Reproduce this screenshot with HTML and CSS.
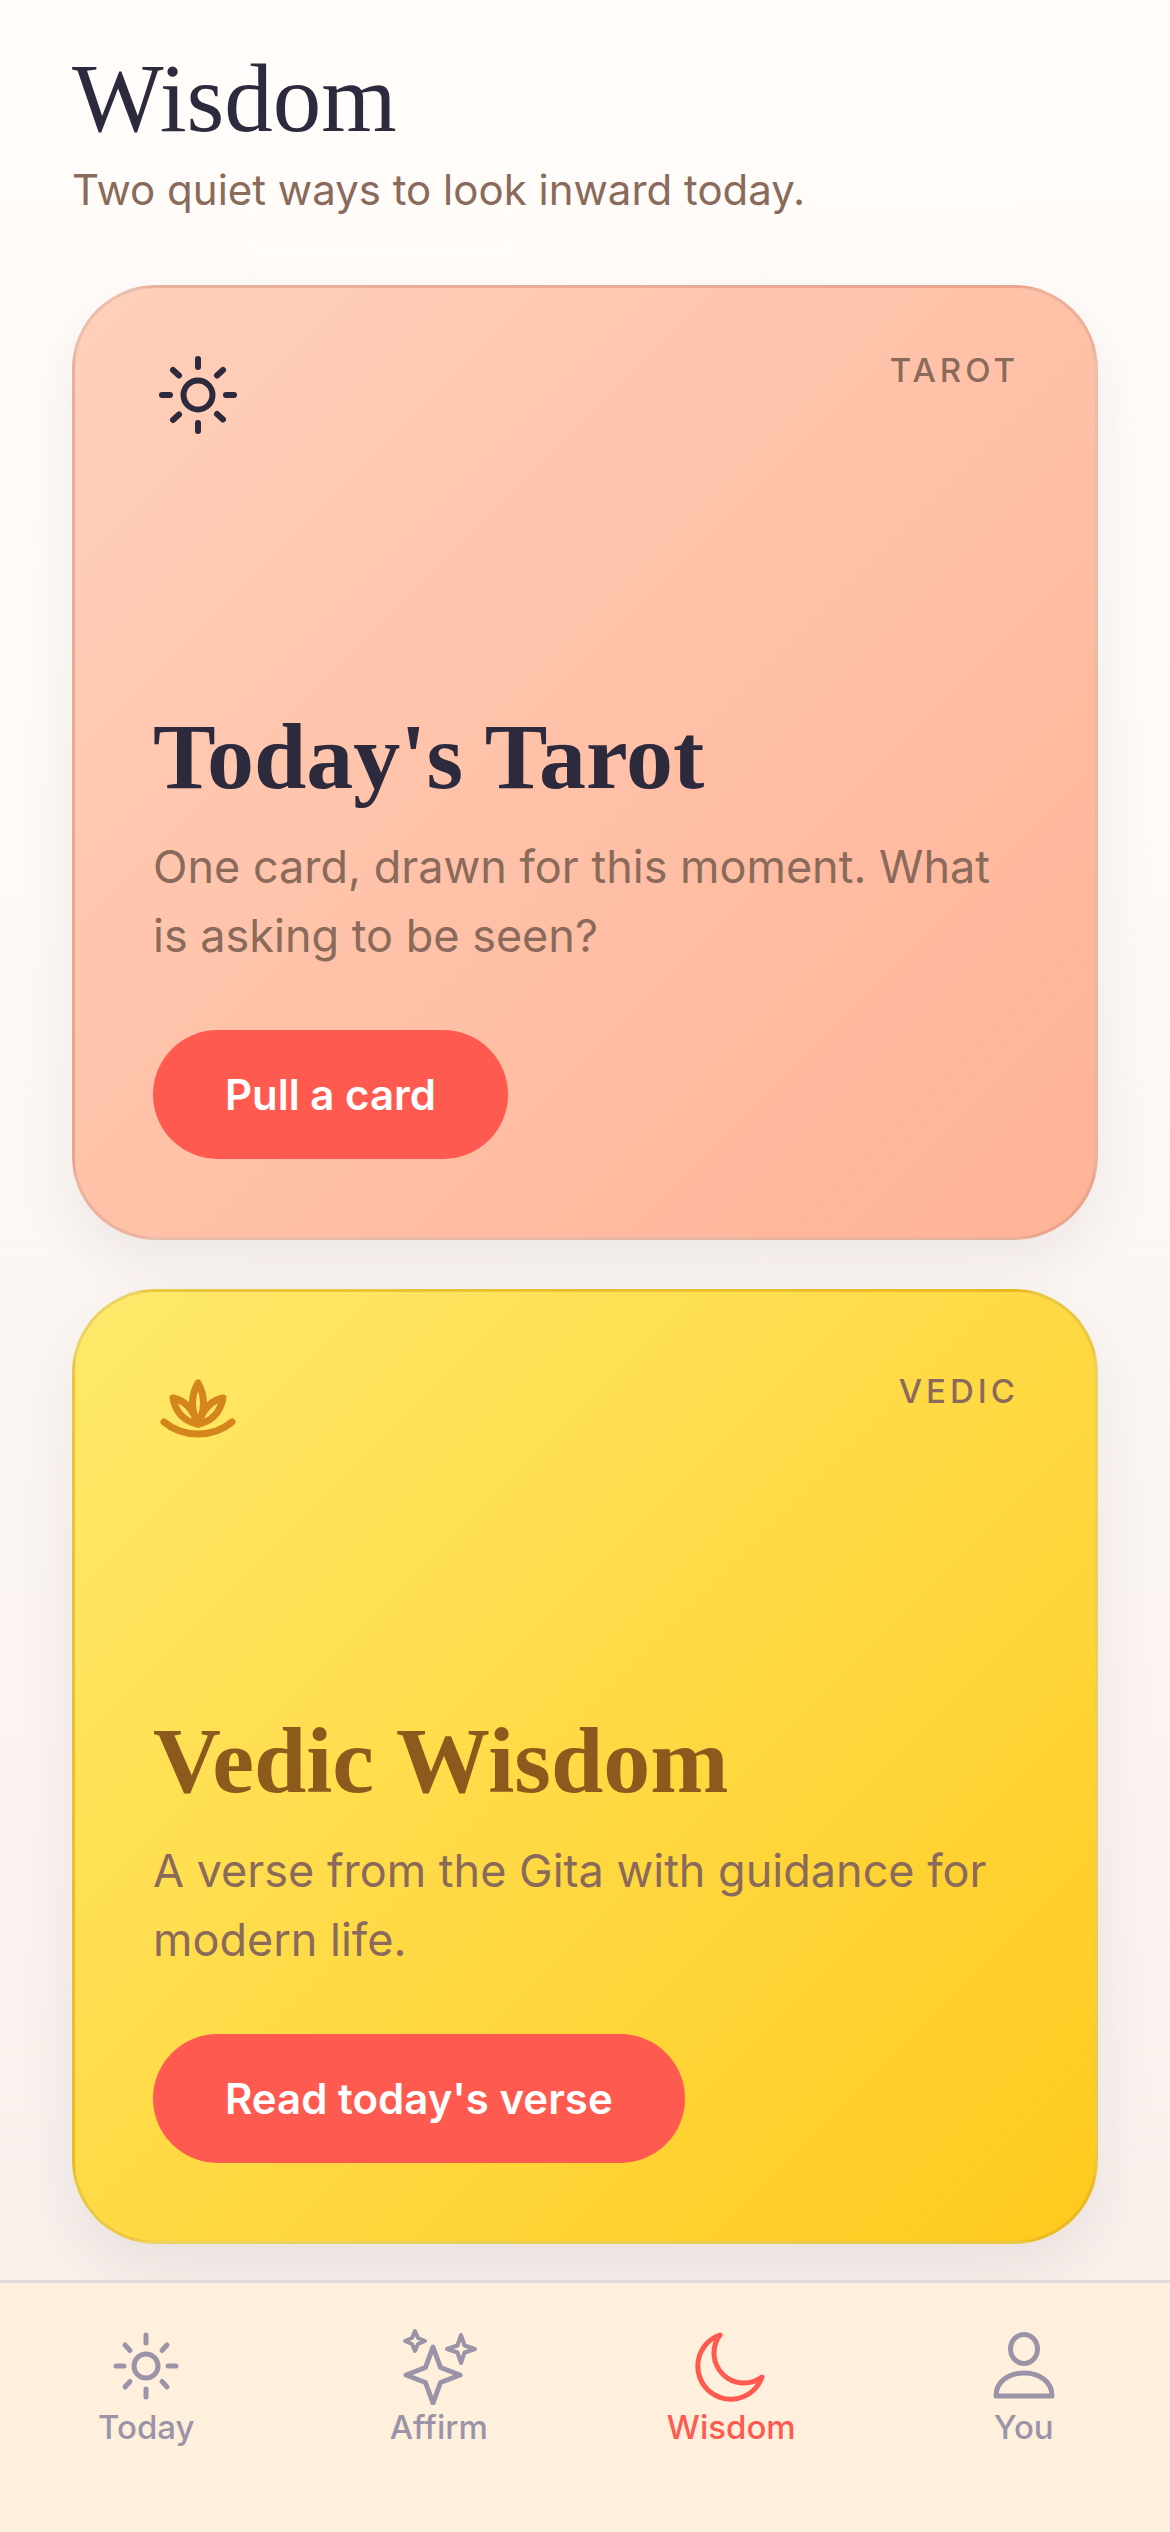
FILE: index.html
```html
<!DOCTYPE html>
<html lang="en">
<head>
<meta charset="utf-8">
<title>Wisdom</title>
<link rel="stylesheet" href="styles.css">
</head>
<body>
<div class="screen">
  <main class="content">
    <header class="head">
      <h1>Wisdom</h1>
      <p>Two quiet ways to look inward today.</p>
    </header>
    <section class="card tarot">
      <div class="card-top">
        <svg class="card-icon" viewBox="0 0 90 90" fill="none" stroke="#2d2a3e" stroke-width="6" stroke-linecap="round">
          <circle cx="45" cy="45" r="14.5"/>
          <path d="M45 9v8M45 73v8M9 45h8M73 45h8M20 20l6 5.500M64 64l6 5.500M20 70l6-5.500M64 25.500l6-5.500"/>
        </svg>
        <span class="tag">TAROT</span>
      </div>
      <h2>Today's Tarot</h2>
      <p class="desc">One card, drawn for this moment. What is asking to be seen?</p>
      <button class="cta">Pull a card</button>
    </section>
    <section class="card vedic">
      <div class="card-top">
        <svg class="card-icon" viewBox="0 0 90 90" fill="none" stroke="#d4861c" stroke-width="7" stroke-linecap="round" stroke-linejoin="round">
          <path d="M45 19C41 26 39.500 32 39.500 39C39.500 47 42 54 45 60C48 54 50.500 47 50.500 39C50.500 32 49 26 45 19Z"/>
          <path d="M20 34C30 36 39 42 45 60C33 58 23 50 20 34Z"/>
          <path d="M70 34C60 36 51 42 45 60C57 58 67 50 70 34Z"/>
          <path d="M11 58C30 74 60 74 79 58"/>
        </svg>
        <span class="tag">VEDIC</span>
      </div>
      <h2>Vedic Wisdom</h2>
      <p class="desc">A verse from the Gita with guidance for modern life.</p>
      <button class="cta">Read today's verse</button>
    </section>
  </main>
  <nav class="tabs">
    <div class="tab">
      <svg viewBox="0 0 78 78" fill="none" stroke="currentColor" stroke-width="5" stroke-linecap="round" stroke-linejoin="round">
        <circle cx="39" cy="39" r="12"/>
        <path d="M39 8v8M39 62v8M9 39h8M61 39h8M18 18l5 5.500M55 54.500l5 5.500M18 60l5-5.500M55 23.500l5-5.500"/>
      </svg>
      <span>Today</span>
    </div>
    <div class="tab">
      <svg viewBox="0 0 78 78" fill="none" stroke="currentColor" stroke-width="5" stroke-linecap="round" stroke-linejoin="round">
        <path d="M33 20L40.500 40.500L60 48L40.500 55.500L33 76L25.500 55.500L6 48L25.500 40.500Z"/>
        <path stroke-width="4" d="M15 4L18 11L25 14L18 17L15 24L12 17L5 14L12 11Z"/>
        <path stroke-width="4" d="M61 8L64.500 18.500L75 22L64.500 25.500L61 36L57.500 25.500L47 22L57.500 18.500Z"/>
      </svg>
      <span>Affirm</span>
    </div>
    <div class="tab active">
      <svg viewBox="0 0 78 78" fill="none" stroke="currentColor" stroke-width="5" stroke-linecap="round" stroke-linejoin="round">
        <path d="M28 8A33 33 0 1 0 70 50A30 30 0 0 1 28 8Z"/>
      </svg>
      <span>Wisdom</span>
    </div>
    <div class="tab">
      <svg viewBox="0 0 78 78" fill="none" stroke="currentColor" stroke-width="5" stroke-linecap="round" stroke-linejoin="round">
        <ellipse cx="39" cy="22" rx="13.500" ry="14.500"/>
        <path d="M11 69C11 55 23 46 39 46C55 46 67 55 67 69Z"/>
      </svg>
      <span>You</span>
    </div>
  </nav>
</div>
</body>
</html>
```
FILE: styles.css
```css
* { box-sizing: border-box; margin: 0; padding: 0; }
html, body { width: 1170px; height: 2532px; overflow: hidden; }
body { font-family: "Inter", "Liberation Sans", sans-serif; }
.screen {
  width: 1170px; height: 2532px;
  display: flex; flex-direction: column;
  background: linear-gradient(180deg, #fffcf9 0%, #fffbf8 25%, #f8efea 100%);
}
.content {
  flex: 1;
  padding: 0 72px;
  display: flex; flex-direction: column; gap: 49px;
}
.head { height: 236px; padding-top: 44px; }
.head h1 {
  font-family: "Liberation Serif", serif;
  font-weight: 400; font-size: 97px; line-height: 110px;
  color: #2d2a3e;
}
.head p { font-size: 42px; line-height: 60px; margin-top: 6px; color: #8a6a5a; }
.card {
  height: 955px;
  border-radius: 84px;
  border: 3px solid rgba(45, 42, 62, 0.1);
  padding: 62px 78px 78px;
  display: flex; flex-direction: column;
  box-shadow: 0 24px 60px rgba(45, 42, 62, 0.08);
}
.tarot { background: linear-gradient(135deg, #ffd0ba 0%, #ffb296 100%); }
.vedic { background: linear-gradient(135deg, #ffe96b 0%, #ffca1e 100%); }
.card-top { display: flex; justify-content: space-between; align-items: flex-start; flex: 1; }
.card-icon { width: 90px; height: 90px; display: block; }
.vedic .card-icon { margin-top: 10px; }
.tag { font-size: 33px; font-weight: 500; letter-spacing: 4px; line-height: 40px; margin-right: -2px; color: #8a6a5a; }
.vedic .tag { margin-top: 17px; }
.card h2 {
  font-family: "Liberation Serif", serif;
  font-weight: 700; font-size: 94px; line-height: 112px;
  color: #2d2a3e;
}
.vedic h2 { color: #8b5a1c; }
.desc { font-size: 45px; line-height: 69px; color: #8a6a5a; margin-top: 20px; }
.cta {
  align-self: flex-start;
  height: 129px; padding: 0 72px;
  margin-top: 60px;
  border: 0; border-radius: 65px;
  background: #ff5a4f; color: #fff;
  font-family: inherit; font-size: 42px; font-weight: 600;
}
.tabs {
  height: 252px;
  border-top: 3px solid #dedbd8;
  background: #fff0dd;
  display: grid; grid-template-columns: repeat(4, 1fr);
  padding-top: 44px;
}
.tab { display: flex; flex-direction: column; align-items: center; color: #9b94a8; }
.tab svg { width: 78px; height: 78px; display: block; }
.tab span { font-size: 33px; font-weight: 500; line-height: 40px; margin-top: 2px; }
.tab.active { color: #ff5a4f; }
```
